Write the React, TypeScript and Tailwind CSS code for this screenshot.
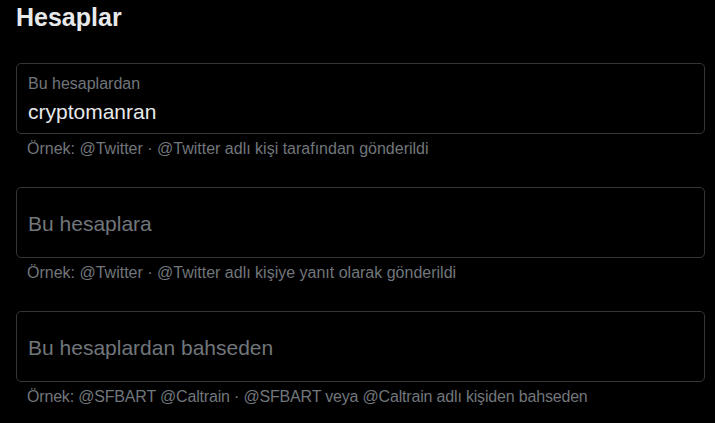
import React from "react";

const font = { fontFamily: '"Liberation Sans", Arial, sans-serif' };

function Field({
  label,
  value,
  hint,
  tight,
}: {
  label: string;
  value?: string;
  hint: string;
  tight?: boolean;
}) {
  return (
    <div>
      <div className="h-[71px] rounded-[5px] border border-[#333639] px-[11px]">
        {value ? (
          <>
            <div className="pt-[10px] text-[16px] leading-[20px] text-[#71767b]">{label}</div>
            <div className="mt-[5px] text-[21px] leading-[26px] text-[#e7e9ea]">{value}</div>
          </>
        ) : (
          <div className="pt-[23px] text-[21px] leading-[26px] text-[#71767b]">{label}</div>
        )}
      </div>
      <div
        className={
          "pl-[11px] pt-[5px] text-[16px] leading-[20px] text-[#71767b] whitespace-nowrap" +
          (tight ? " tracking-[-0.18px]" : "")
        }
      >
        {hint}
      </div>
    </div>
  );
}

export default function App() {
  return (
    <div className="min-h-[423px] w-[715px] bg-black" style={font}>
      <div className="pl-4 pr-[10px]">
        <h2 className="pt-[2px] text-[25px] font-bold leading-[30px] text-[#e7e9ea]">Hesaplar</h2>
        <div className="mt-[31px] flex flex-col gap-[28px]">
          <Field
            label="Bu hesaplardan"
            value="cryptomanran"
            hint="Örnek: @Twitter · @Twitter adlı kişi tarafından gönderildi"
          />
          <Field
            label="Bu hesaplara"
            hint="Örnek: @Twitter · @Twitter adlı kişiye yanıt olarak gönderildi"
          />
          <Field
            label="Bu hesaplardan bahseden"
            hint="Örnek: @SFBART @Caltrain · @SFBART veya @Caltrain adlı kişiden bahseden"
            tight
          />
        </div>
      </div>
    </div>
  );
}
